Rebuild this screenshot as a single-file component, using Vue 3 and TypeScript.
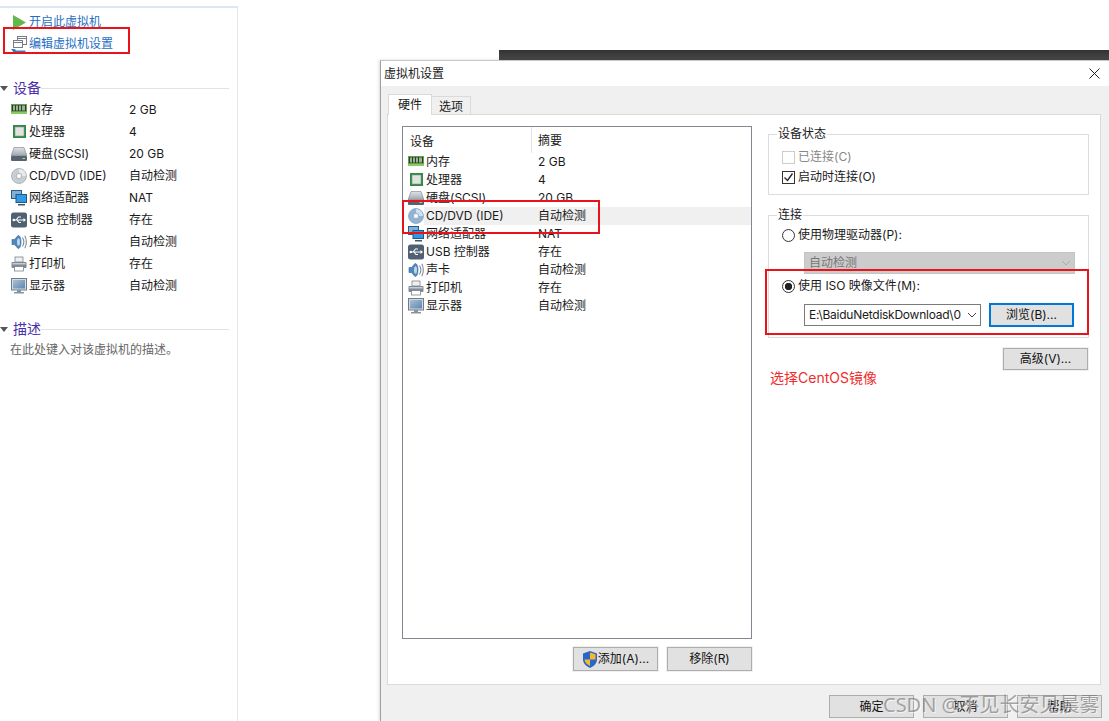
<script setup lang="ts">
interface Device {
  name: string
  summary: string
  icon: string
}

const devices: Device[] = [
  { name: '内存', summary: '2 GB', icon: 'mem' },
  { name: '处理器', summary: '4', icon: 'cpu' },
  { name: '硬盘(SCSI)', summary: '20 GB', icon: 'disk' },
  { name: 'CD/DVD (IDE)', summary: '自动检测', icon: 'cd' },
  { name: '网络适配器', summary: 'NAT', icon: 'net' },
  { name: 'USB 控制器', summary: '存在', icon: 'usb' },
  { name: '声卡', summary: '自动检测', icon: 'snd' },
  { name: '打印机', summary: '存在', icon: 'prn' },
  { name: '显示器', summary: '自动检测', icon: 'mon' },
]

// the disc turns blue only on the selected row of the dialog list
const listIcon = (d: Device) => (d.icon === 'cd' ? 'cd-sel' : d.icon)
</script>

<template>
  <div class="desktop">
    <svg class="sprite" width="0" height="0">
      <defs>
        <linearGradient id="disk-top" x1="0" y1="0" x2="0" y2="1">
          <stop offset="0" stop-color="#dfe3e7" />
          <stop offset="1" stop-color="#9aa3ad" />
        </linearGradient>
        <linearGradient id="mon-screen" x1="0" y1="0" x2="1" y2="1">
          <stop offset="0" stop-color="#a9c0d6" />
          <stop offset="1" stop-color="#5f86ab" />
        </linearGradient>
        <symbol id="ic-mem" viewBox="0 0 16 16">
          <rect x="0" y="2" width="16" height="10" fill="#5aa845" />
          <rect x="1" y="3" width="14" height="6" fill="#2b3f28" />
          <path d="M2 3.500h2v5H2zM5 3.500h2v5H5zM8 3.500h2v5H8zM11 3.500h3v5h-3z" fill="#a3ad98" />
          <rect x="0" y="10" width="16" height="2" fill="#86cc62" />
        </symbol>
        <symbol id="ic-cpu" viewBox="0 0 16 16">
          <rect x="2" y="1" width="13" height="13" fill="#2f8a45" />
          <rect x="4" y="3" width="9" height="9" fill="#e0e3e0" stroke="#8b948b" stroke-width=".6" />
        </symbol>
        <symbol id="ic-disk" viewBox="0 0 16 16">
          <path d="M3 1.500h10l3 8.500H0z" fill="url(#disk-top)" stroke="#79828e" stroke-width=".6" />
          <rect x="0" y="10" width="16" height="5" rx="1" fill="#59636f" />
          <rect x="11.500" y="12" width="2.500" height="1" fill="#a6e084" />
        </symbol>
        <symbol id="ic-cd" viewBox="0 0 16 16">
          <circle cx="8" cy="8" r="7.500" fill="#c9ced3" stroke="#a3a9af" stroke-width=".8" />
          <path d="M8 1a7 7 0 0 1 7 7H11a3 3 0 0 0-3-3z" fill="#e8ebee" />
          <circle cx="8" cy="8" r="2.800" fill="#f0f2f4" stroke="#8f969d" stroke-width=".6" />
          <circle cx="8" cy="8" r="1.200" fill="#fff" />
        </symbol>
        <symbol id="ic-cd-sel" viewBox="0 0 16 16">
          <circle cx="8" cy="8" r="7.500" fill="#8eb4d6" stroke="#8fa4b8" stroke-width=".8" />
          <path d="M8 1a7 7 0 0 1 7 7H11a3 3 0 0 0-3-3z" fill="#cfe0ef" />
          <circle cx="8" cy="8" r="2.800" fill="#e9eff5" stroke="#7e95aa" stroke-width=".6" />
          <circle cx="8" cy="8" r="1.200" fill="#fff" />
        </symbol>
        <symbol id="ic-net" viewBox="0 0 16 16">
          <rect x="0.500" y="0.500" width="10" height="8" fill="#7fb2d8" stroke="#2c5a82" />
          <rect x="5" y="4.500" width="10.500" height="8" fill="#2f9be8" stroke="#27577f" />
          <path d="M7 14h7v1.500H7z" fill="#3e5568" />
        </symbol>
        <symbol id="ic-usb" viewBox="0 0 16 16">
          <rect x="0" y="0.500" width="16" height="15" rx="2.500" fill="#4f6073" />
          <path d="M2 8h11M5 8l2.500-3H10M6 8l2 2.500h2" fill="none" stroke="#fff" stroke-width="1.100" />
          <path d="M12.500 6l2.500 2-2.500 2z" fill="#fff" />
          <circle cx="2.800" cy="8" r="1.300" fill="#fff" />
        </symbol>
        <symbol id="ic-snd" viewBox="0 0 16 16">
          <path d="M1 5.500h2.500L7 1.500c2.200 0 3 3 3 6.500s-.8 6.500-3 6.500l-3.500-4H1z" fill="#4f87bf" stroke="#3c6187" stroke-width=".6" />
          <ellipse cx="7.500" cy="8" rx="1.500" ry="3.800" fill="#bcd6ec" />
          <path d="M11.500 3.500c1.500 2.500 1.500 6.500 0 9M13.800 1.800c2 3.500 2 8.900 0 12.400" fill="none" stroke="#7b8b9b" stroke-width="1.100" />
        </symbol>
        <symbol id="ic-prn" viewBox="0 0 16 16">
          <rect x="4" y="1" width="8" height="5" fill="#eef0f2" stroke="#7d848c" stroke-width=".8" />
          <rect x="0.500" y="6" width="15" height="6" rx="1" fill="#808a95" />
          <rect x="1.500" y="7" width="13" height="1.500" fill="#c5ccd3" />
          <rect x="3.500" y="10.500" width="9" height="4.500" fill="#fff" stroke="#7d848c" stroke-width=".8" />
        </symbol>
        <symbol id="ic-mon" viewBox="0 0 16 16">
          <rect x="0.500" y="0.500" width="15" height="11.500" fill="#d3dbe3" stroke="#6c7c8c" />
          <rect x="2" y="2" width="12" height="8.500" fill="url(#mon-screen)" />
          <path d="M6 12h4v2h3v1.500H3V14h3z" fill="#8593a1" />
        </symbol>
      </defs>
    </svg>

    <aside class="side">
      <div class="action">
        <svg class="play" width="13" height="15" viewBox="0 0 13 15"><path d="M0 0l13 7.500L0 15z" fill="#62b84a" /></svg>
        <span class="action-text">开启此虚拟机</span>
      </div>
      <div class="action">
        <svg class="edit" viewBox="0 0 16 18" width="16" height="18">
          <rect x="6.500" y="0.500" width="9" height="8" fill="#fff" stroke="#777d85" />
          <path d="M6.500 2.500h9" stroke="#777d85" />
          <rect x="2.500" y="4.500" width="9" height="7" fill="#fff" stroke="#777d85" />
          <path d="M2.500 6.500h9" stroke="#777d85" />
          <path d="M0 13h4l1 1.500h9.500V16.500H5L4 18H0l2-2.500z" fill="#3f7cc0" />
        </svg>
        <span class="action-text">编辑虚拟机设置</span>
      </div>

      <div class="section-head first">
        <i class="caret"></i>
        <span>设备</span>
        <i class="rule"></i>
      </div>
      <div v-for="d in devices" :key="d.name" class="side-row">
        <svg class="ic"><use :href="`#ic-${d.icon}`" /></svg>
        <span class="side-name">{{ d.name }}</span>
        <span>{{ d.summary }}</span>
      </div>

      <div class="section-head second">
        <i class="caret"></i>
        <span>描述</span>
        <i class="rule"></i>
      </div>
      <p class="desc">在此处键入对该虚拟机的描述。</p>
    </aside>

    <div class="dark-bar"></div>

    <section class="dialog">
      <header class="title">
        <span>虚拟机设置</span>
        <svg class="close" width="11" height="11" viewBox="0 0 11 11"><path d="M.500.500l10 10M10.500.500l-10 10" stroke="#222" fill="none" /></svg>
      </header>
      <div class="body">
        <div class="tabs">
          <span class="tab active">硬件</span>
          <span class="tab">选项</span>
        </div>
        <div class="panel">
          <div class="left-col">
            <div class="list">
              <div class="list-head">
                <span class="col-a">设备</span>
                <span class="col-b">摘要</span>
              </div>
              <div
                v-for="d in devices"
                :key="d.name"
                class="list-row"
                :class="{ selected: d.icon === 'cd' }"
              >
                <svg class="ic"><use :href="`#ic-${listIcon(d)}`" /></svg>
                <span class="list-name">{{ d.name }}</span>
                <span>{{ d.summary }}</span>
              </div>
            </div>
            <div class="list-actions">
              <button class="btn">
                <svg width="16" height="17" viewBox="0 0 16 17">
                  <path d="M8 0l7 2.500v6c0 4-3.500 7-7 8.500-3.500-1.500-7-4.500-7-8.500v-6z" fill="#2a66c8" />
                  <path d="M8 1.500l5.500 1.700v5.300H8zM8 8.500v6.500c-2.700-1.300-5.200-3.500-5.500-6.500z" fill="#f5b82e" />
                </svg>
                添加(A)...
              </button>
              <button class="btn">移除(R)</button>
            </div>
          </div>

          <div class="right-col">
            <fieldset class="group status">
              <legend>设备状态</legend>
              <div class="opt disabled"><i class="check"></i>已连接(C)</div>
              <div class="opt">
                <i class="check">
                  <svg width="11" height="11" viewBox="0 0 11 11"><path d="M1.500 5.500l3 3 5-7" fill="none" stroke="#222" stroke-width="1.300" /></svg>
                </i>启动时连接(O)
              </div>
            </fieldset>

            <fieldset class="group conn">
              <legend>连接</legend>
              <div class="opt"><i class="radio"></i>使用物理驱动器(P):</div>
              <div class="indent">
                <div class="combo off">
                  <span>自动检测</span>
                  <svg width="10" height="6" viewBox="0 0 10 6"><path d="M1 1l4 4 4-4" fill="none" stroke="#a8a8a8" /></svg>
                </div>
              </div>
              <div class="opt iso"><i class="radio on"></i>使用 ISO 映像文件(M):</div>
              <div class="indent file-row">
                <div class="combo path">
                  <span class="path-text">E:\BaiduNetdiskDownload\0</span>
                  <svg width="10" height="6" viewBox="0 0 10 6"><path d="M1 1l4 4 4-4" fill="none" stroke="#444" /></svg>
                </div>
                <button class="btn focus">浏览(B)...</button>
              </div>
            </fieldset>

            <div class="adv-row"><button class="btn adv">高级(V)...</button></div>
            <p class="note">选择CentOS镜像</p>
          </div>
        </div>
        <footer class="foot">
          <button class="btn">确定</button>
          <button class="btn">取消</button>
          <button class="btn">帮助</button>
        </footer>
      </div>
    </section>

    <div class="mark mark-edit"></div>
    <div class="mark mark-cd"></div>
    <div class="mark mark-iso"></div>
    <div class="watermark">CSDN @不见长安见晨雾</div>
  </div>
</template>

<style>
html,
body {
  margin: 0;
  background: #fff;
  overflow: hidden;
}
</style>

<style scoped>
.desktop {
  position: relative;
  width: 1109px;
  height: 721px;
  overflow: hidden;
  background: #fff;
  font: 12px/18px Inter, "Noto Sans CJK SC", sans-serif;
  color: #1a1a1a;
}

.sprite {
  position: absolute;
}

.ic {
  width: 16px;
  height: 16px;
  flex: none;
}

.side {
  box-sizing: border-box;
  width: 238px;
  height: 721px;
  margin-top: 6px;
  padding-top: 3px;
  border-top: 2px solid #dce9f5;
  border-right: 1px solid #e3e8ee;
}

.action {
  display: flex;
  align-items: center;
  height: 22px;
  padding-left: 11px;
  gap: 2px;
  color: #1f6fc4;
}

.play {
  margin: 0 1px 0 2px;
}

.edit {
  margin: 2px 0 0 0;
  flex: none;
}

.section-head {
  display: flex;
  align-items: center;
  height: 22px;
  font-size: 14px;
  color: #4a2fa8;
}

.section-head.first {
  margin-top: 22px;
}

.section-head.second {
  margin-top: 21px;
}

.caret {
  width: 0;
  height: 0;
  margin: 0 6px 0 0;
  border-left: 4px solid transparent;
  border-right: 4px solid transparent;
  border-top: 5px solid #555;
}

.rule {
  width: 188px;
  height: 1px;
  background: #dfe3e8;
}

.section-head span {
  margin-left: -1px;
}

.side-row {
  display: flex;
  align-items: center;
  height: 22px;
  padding-left: 11px;
}

.side-name {
  width: 100px;
  margin-left: 2px;
}

.desc {
  margin: 0;
  padding: 1px 0 0 10px;
  color: #666;
}

.dark-bar {
  position: absolute;
  left: 499px;
  right: 0;
  top: 50px;
  height: 11px;
  background: linear-gradient(#333, #4a4a4a);
}

.dialog {
  position: absolute;
  left: 380px;
  top: 60px;
  right: 0;
  bottom: 0;
  display: flex;
  flex-direction: column;
  border-left: 1px solid #a0a0a0;
  border-top: 1px solid #c8c8c8;
  background: #fff;
  box-shadow: -1px 0 3px rgba(0, 0, 0, 0.15);
}

.title {
  display: flex;
  align-items: center;
  justify-content: space-between;
  height: 25px;
  padding: 0 9px 0 3px;
  flex: none;
}

.body {
  flex: 1;
  display: flex;
  flex-direction: column;
  padding: 9px 8px 0 6px;
  background: #f0f0f0;
}

.tabs {
  display: flex;
  align-items: flex-end;
  height: 20px;
  position: relative;
  z-index: 1;
  margin-bottom: -1px;
  margin-left: 1px;
}

.tab {
  box-sizing: border-box;
  height: 19px;
  width: 39px;
  text-align: center;
  line-height: 20px;
  border: 1px solid #dadada;
  border-left: 0;
  background: #f0f0f0;
}

.tab.active {
  height: 21px;
  width: 44px;
  line-height: 20px;
  border-left: 1px solid #dadada;
  border-bottom: 0;
  background: #fff;
}

.panel {
  box-sizing: border-box;
  height: 571px;
  display: flex;
  gap: 16px;
  padding: 11px 10px 0 14px;
  background: #fff;
  border: 1px solid #dadada;
}

.left-col {
  width: 350px;
  flex: none;
}

.list {
  box-sizing: border-box;
  height: 513px;
  border: 1px solid #828790;
}

.list-head {
  display: flex;
  height: 26px;
  align-items: center;
}

.col-a {
  box-sizing: border-box;
  width: 129px;
  padding-left: 7px;
  height: 26px;
  line-height: 29px;
  border-right: 1px solid #e5e5e5;
}

.col-b {
  padding-left: 6px;
  line-height: 29px;
}

.list-row {
  display: flex;
  align-items: center;
  height: 18px;
  padding-left: 5px;
}

.list-row.selected {
  background: linear-gradient(90deg, #fff 21px, #f0f0f0 21px);
}

.list-name {
  width: 112px;
  margin-left: 2px;
}

.list-actions {
  display: flex;
  justify-content: flex-end;
  gap: 9px;
  margin-top: 8px;
}

.btn {
  box-sizing: border-box;
  display: inline-flex;
  align-items: center;
  justify-content: center;
  width: 85px;
  height: 24px;
  padding: 0;
  border: 1px solid #adadad;
  outline: 1px solid #f0f0f0;
  background: #e1e1e1;
  color: #111;
  font: inherit;
}

.right-col {
  width: 321px;
  flex: none;
}

.group {
  box-sizing: border-box;
  width: 321px;
  margin: 0;
  padding: 0 0 0 13px;
  border: 1px solid #dcdcdc;
  min-width: 0;
}

.group legend {
  margin-left: -5px;
  padding: 0 1px;
}

.status {
  height: 70px;
  margin-top: -1px;
  margin-bottom: 11px;
  padding-top: 4px;
}

.conn {
  height: 132px;
  padding-top: 1px;
}

.opt {
  display: flex;
  align-items: center;
  height: 20px;
  gap: 3px;
}

.opt.disabled {
  color: #888;
}

.check {
  box-sizing: border-box;
  display: flex;
  align-items: center;
  justify-content: center;
  width: 13px;
  height: 13px;
  border: 1px solid #333;
  background: #fff;
}

.disabled .check {
  border-color: #ccc;
}

.radio {
  box-sizing: border-box;
  width: 13px;
  height: 13px;
  border: 1px solid #333;
  border-radius: 50%;
  display: block;
  background: #fff;
}

.radio.on {
  background: radial-gradient(circle, #222 3.400px, #fff 4px);
}

.indent {
  padding-left: 22px;
  margin-top: 7px;
}

.combo {
  box-sizing: border-box;
  display: flex;
  align-items: center;
  justify-content: space-between;
  height: 22px;
  padding: 0 3px 0 4px;
}

.combo.off {
  width: 271px;
  background: #ccc;
  color: #777;
  border: 1px solid #c4c4c4;
}

.opt.iso {
  margin-top: 2px;
}

.file-row {
  display: flex;
  align-items: center;
  gap: 8px;
  margin-top: 7px;
}

.combo.path {
  width: 177px;
  background: #fff;
  border: 1px solid #7a7a7a;
}

.path-text {
  width: 154px;
  overflow: hidden;
  white-space: nowrap;
  letter-spacing: -0.25px;
}

.btn.focus {
  border: 2px solid #0078d7;
  outline: 0;
}

.adv-row {
  display: flex;
  justify-content: flex-end;
  margin-top: 10px;
  padding-right: 1px;
}

.btn.adv {
  height: 22px;
}

.note {
  margin: -2px 0 0 2px;
  font-size: 14px;
  line-height: 20px;
  color: #f02b2b;
}

.foot {
  display: flex;
  justify-content: flex-end;
  gap: 9px;
  margin-top: 10px;
  margin-right: -1px;
}

.foot .btn {
  height: 23px;
}

.mark {
  position: absolute;
  box-sizing: border-box;
  border: 2px solid #e8141c;
}

.mark-edit {
  left: 3px;
  top: 27px;
  width: 127px;
  height: 27px;
}

.mark-cd {
  left: 402px;
  top: 200px;
  width: 198px;
  height: 34px;
}

.mark-iso {
  left: 765px;
  top: 269px;
  width: 324px;
  height: 66px;
}

.watermark {
  position: absolute;
  left: 883px;
  top: 692px;
  font: 20px/26px "Noto Sans", "Noto Sans CJK SC", sans-serif;
  white-space: nowrap;
  color: rgba(110, 110, 110, 0.6);
  text-shadow: 1px 1px rgba(255, 255, 255, 0.6);
}
</style>
